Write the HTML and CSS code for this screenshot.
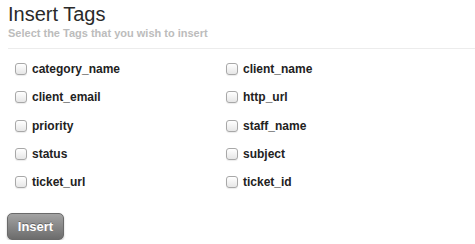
FILE: index.html
```html
<!DOCTYPE html>
<html lang="en">
<head>
    <meta charset="UTF-8">
    <title>Insert Tags</title>
    <link rel="stylesheet" href="styles.css">
</head>
<body>
    <form class="tags-form">
        <div class="header">
            <h1 class="title">Insert Tags</h1>
            <p class="subtitle">Select the Tags that you wish to insert</p>
        </div>
        <div class="tag-list">
            <label class="tag"><input type="checkbox"><span>category_name</span></label>
            <label class="tag"><input type="checkbox"><span>client_name</span></label>
            <label class="tag"><input type="checkbox"><span>client_email</span></label>
            <label class="tag"><input type="checkbox"><span>http_url</span></label>
            <label class="tag"><input type="checkbox"><span>priority</span></label>
            <label class="tag"><input type="checkbox"><span>staff_name</span></label>
            <label class="tag"><input type="checkbox"><span>status</span></label>
            <label class="tag"><input type="checkbox"><span>subject</span></label>
            <label class="tag"><input type="checkbox"><span>ticket_url</span></label>
            <label class="tag"><input type="checkbox"><span>ticket_id</span></label>
        </div>
        <button type="button" class="insert-btn">Insert</button>
    </form>
</body>
</html>
```

FILE: styles.css
```css
* {
    margin: 0;
    padding: 0;
    box-sizing: border-box;
    font-family: "Liberation Sans", Arial, sans-serif;
}

body {
    background: #fff;
}

.tags-form {
    display: flex;
    flex-direction: column;
    align-items: flex-start;
    padding-left: 8px;
}

.header {
    width: 100%;
    padding-top: 3px;
    padding-bottom: 8px;
    border-bottom: 1px solid #ececec;
}

.title {
    font-size: 20px;
    font-weight: normal;
    color: #2a2a2a;
    line-height: 23px;
}

.subtitle {
    font-size: 11px;
    font-weight: bold;
    color: #bcbcbc;
    line-height: 13px;
    margin-top: 1px;
}

.tag-list {
    display: grid;
    grid-template-columns: 211px 211px;
    grid-auto-rows: 28.25px;
    padding: 6px 0 0 7px;
}

.tag {
    display: flex;
    align-items: center;
    gap: 5px;
    font-size: 12px;
    font-weight: bold;
    color: #222;
}

.tag input {
    appearance: none;
    width: 12px;
    height: 12px;
    border: 1px solid #a8a8a8;
    border-radius: 3px;
    background: linear-gradient(#fff, #e6e6e6);
    box-shadow: 0 1px 1px rgba(0, 0, 0, 0.08);
}

.insert-btn {
    margin: 17px 0 0 -1px;
    width: 57px;
    height: 27px;
    border: 1px solid #6a6a6a;
    border-radius: 5px;
    background: linear-gradient(#a3a3a3, #6c6c6c);
    color: #fff;
    font-size: 13px;
    font-weight: bold;
    text-shadow: 0 -1px 0 rgba(0, 0, 0, 0.3);
    box-shadow: 0 1px 2px rgba(0, 0, 0, 0.25);
}
```
